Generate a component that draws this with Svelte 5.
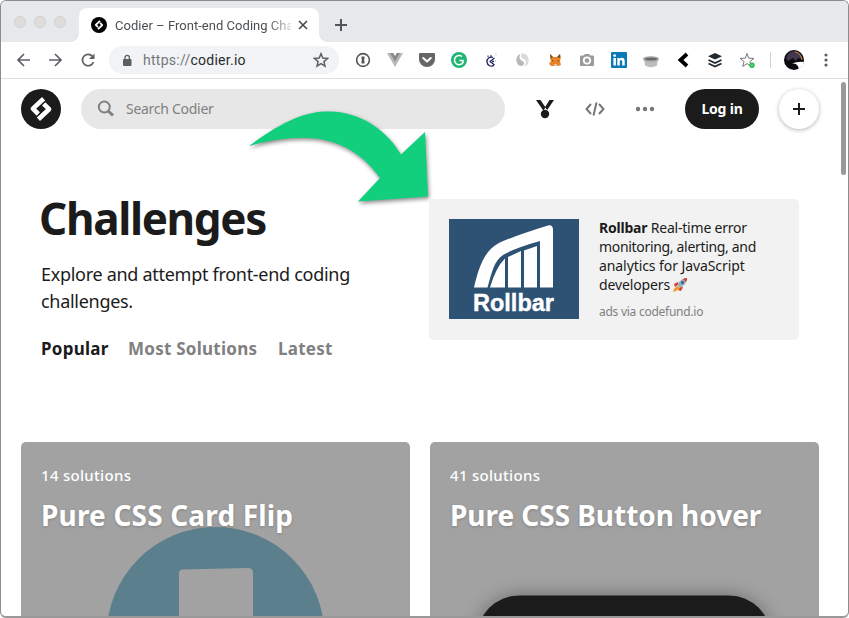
<script>
  const cards = [
    { count: '14 solutions', title: 'Pure CSS Card Flip', art: 'flip' },
    { count: '41 solutions', title: 'Pure CSS Button hover', art: 'button' }
  ];
</script>

{#snippet mark()}
  <g fill="none" stroke="#fff" stroke-width="4.600" stroke-linejoin="round">
    <path d="M22.600 9.800L11.900 19.600L17.300 25" />
    <path d="M22.700 14.800L28.100 20.200L17.400 30.200" />
  </g>
{/snippet}

<div class="window">
  <div class="tabs">
    <div class="lights"><i></i><i></i><i></i></div>
    <div class="tab">
      <svg class="fav" width="16" height="16" viewBox="0 0 40 40"><circle cx="20" cy="20" r="20" fill="#000" />{@render mark()}</svg>
      <span class="tabtitle">Codier – Front-end Coding Cha</span>
      <svg width="12" height="12" viewBox="0 0 12 12"><path d="M2 2L10 10M10 2L2 10" stroke="#45494d" stroke-width="1.600" /></svg>
      <b class="flare left"></b><b class="flare right"></b>
    </div>
    <svg class="newtab" width="14" height="14" viewBox="0 0 14 14"><path d="M7 1V13M1 7H13" stroke="#505458" stroke-width="2" /></svg>
  </div>

  <div class="toolbar">
    <svg class="nav" width="84" height="18" viewBox="0 0 84 18" fill="none" stroke="#5c6065" stroke-width="1.700">
      <path d="M15 9H3M9 3L3 9L9 15" /><path d="M34 9H46M40 3L46 9L40 15" />
      <path d="M77.300 5.100A5.700 5.700 0 1 0 78.500 11" /><path d="M79.500 2.500V8H74Z" fill="#5c6065" stroke="none" />
    </svg>
    <div class="url">
      <svg width="10" height="13" viewBox="0 0 10 13"><rect x="1" y="5" width="8.500" height="7" rx="1" fill="#5c6065" /><path d="M3 6V3.600a2.200 2.200 0 0 1 4.400 0V6" fill="none" stroke="#5c6065" stroke-width="1.300" /></svg>
      <span class="address"><em>https://</em>codier.io</span>
      <svg width="16" height="16" viewBox="0 0 16 16"><path d="M8 1.700L9.800 6.100L14.500 6.500L10.900 9.600L12 14.200L8 11.700L4 14.200L5.100 9.600L1.500 6.500L6.200 6.100Z" fill="none" stroke="#5c6065" stroke-width="1.500" /></svg>
    </div>
    <div class="ext">
      <svg viewBox="0 0 16 16"><circle cx="8" cy="8" r="6.400" fill="#fff" stroke="#555" stroke-width="1.600" /><path d="M6.500 4.500H9.500V7L8.900 8L9.500 9V11.500H6.500V9L7.100 8L6.500 7Z" fill="#555" /></svg>
      <svg viewBox="0 0 16 16"><path d="M0 1H4L8 8L12 1H16L8 15Z" fill="#b8b8b8" /><path d="M3 1H6.200L8 4L9.800 1H13L8 9.500Z" fill="#898989" /></svg>
      <svg viewBox="0 0 16 16"><path d="M1 1H15Q16 1 16 2V7.500A8 7.500 0 0 1 0 7.500V2Q0 1 1 1Z" fill="#666" /><path d="M4.200 6L8 9.500L11.800 6" fill="none" stroke="#fff" stroke-width="2" stroke-linecap="round" stroke-linejoin="round" /></svg>
      <svg viewBox="0 0 16 16"><circle cx="8" cy="8" r="8" fill="#20b573" /><path d="M11 4.500A4.600 4.600 0 1 0 12 10.500V8.400H8.500M12 8.200V11" fill="none" stroke="#fff" stroke-width="1.500" /></svg>
      <svg viewBox="0 0 16 16"><path d="M10 5.400A4.500 4.500 0 1 0 11 13.300" fill="none" stroke="#25205d" stroke-width="1.300" /><path d="M5 3.500V5M8 3V5" stroke="#25205d" stroke-width="1" /><path d="M11.500 6L7 9.500L11.500 13" fill="none" stroke="#25205d" stroke-width="1.200" /><circle cx="10" cy="9.500" r="1" fill="#25205d" /><path d="M13 1V4M12.500 8V10" stroke="#9ce5d3" stroke-width=".7" /></svg>
      <svg viewBox="0 0 16 16"><path d="M5.500 1.500A7 7 0 0 0 3 12.500C4 14 8 15 9 12C10 9 4.500 9 4.500 5Q4.500 3 5.500 1.500Z" fill="#b8b8b8" /><path d="M7 1.200C5 5 7 6 9.500 7.500C12 9 11 13 9 14.800A7 7 0 0 0 7 1.200Z" fill="#dadada" /></svg>
      <svg viewBox="0 0 16 16"><path d="M3 2L6 5H10L13 2L14 5L13 9L14 13L11 14H4L2 12L4 9L3 6Z" fill="#e98228" /><path d="M3 2L6 5L4 7ZM13 2L10 5L13 6ZM5 8L7 9L5 9.500ZM10 9L12 8V9.500Z" fill="#75502f" /><path d="M7 12H10V14H7Z" fill="#d4c5b8" /></svg>
      <svg viewBox="0 0 16 16"><path d="M2 3.500H4.500L6 2H10L11.500 3.500H14Q15 3.500 15 4.500V13Q15 14 14 14H2Q1 14 1 13V4.500Q1 3.500 2 3.500Z" fill="#9b9b9b" /><circle cx="8" cy="8.500" r="3.200" fill="none" stroke="#fff" stroke-width="1.800" /></svg>
      <svg viewBox="0 0 16 16"><rect width="16" height="16" rx="1" fill="#087ab5" /><g fill="#fff"><rect x="2.400" y="6" width="2.500" height="7.500" /><circle cx="3.650" cy="3.600" r="1.400" /><path d="M6.300 6H8.600V7Q9.500 5.700 11 5.800Q13.700 5.900 13.700 9.200V13.500H11.200V9.700Q11.200 8 10 8Q8.800 8 8.800 9.700V13.500H6.300Z" /></g></svg>
      <svg viewBox="0 0 16 16"><path d="M1 7H15L14 13.500Q8 17 2 13.500Z" fill="#bdbdbd" /><ellipse cx="8" cy="7" rx="8" ry="2.700" fill="#a2a2a2" /><ellipse cx="8" cy="7" rx="6" ry="1.300" fill="#686868" /></svg>
      <svg viewBox="0 0 16 16"><path d="M12 2L5.500 8L12 14" fill="none" stroke="#000" stroke-width="3.800" /></svg>
      <svg viewBox="0 0 16 16"><path d="M8 1L15 4.200L8 7.500L1 4.200Z" fill="#222a30" /><path d="M1.500 8L8 11L14.500 8M1.500 11.500L8 14.500L14.500 11.500" fill="none" stroke="#222a30" stroke-width="1.900" /></svg>
      <svg viewBox="0 0 16 16"><path d="M8 1.500L9.700 6.200L15 6.400L10.900 9.600L12.300 14.500L8 11.600L3.700 14.500L5.100 9.600L1 6.400L6.300 6.200Z" fill="#fff" stroke="#777" stroke-width="1" /><circle cx="13" cy="13.300" r="2.700" fill="#23bd4c" /><path d="M13 12V14.600M11.700 13.300H14.300" stroke="#8be39e" stroke-width=".7" /></svg>
    </div>
    <span class="sep"></span>
    <svg class="avatar" width="20" height="20" viewBox="0 0 20 20"><circle cx="10" cy="10" r="10" fill="#0d0b10" /><path d="M2 8Q4 1 11 1Q17 2 18 9L14 8L12 11L9 8L4 11Z" fill="#43374f" /><path d="M11 2Q17 3 18 10" fill="none" stroke="#b77833" stroke-width="1.200" /><path d="M20 12Q14 11 8 13.500Q12 13 13.500 15.500Q15 17 14.500 19A10 10 0 0 0 20 12Z" fill="#fff" /></svg>
    <svg class="dots" width="4" height="14" viewBox="0 0 4 14" fill="#5c6065"><circle cx="2" cy="2" r="1.600" /><circle cx="2" cy="7" r="1.600" /><circle cx="2" cy="12" r="1.600" /></svg>
  </div>

  <main>
    <header>
      <svg width="40" height="40" viewBox="0 0 40 40"><circle cx="20" cy="20" r="20" fill="#1b1b1b" />{@render mark()}</svg>
      <div class="search">
        <svg width="18" height="18" viewBox="0 0 18 18" fill="none" stroke="#808080"><circle cx="7.300" cy="7" r="5.500" stroke-width="2" /><path d="M11.200 11L16 15.500" stroke-width="3" /></svg>
        <span>Search Codier</span>
      </div>
      <svg class="medal" width="18" height="20" viewBox="0 0 18 20" fill="#1b1b1b"><path d="M0 1H4.500L9.600 8.500L7.300 11.500Z" /><path d="M13.500 1H18L11.200 11L9 8.200Z" /><circle cx="9" cy="15" r="4.200" /></svg>
      <svg class="code" width="20" height="16" viewBox="0 0 20 16" fill="none" stroke="#777" stroke-width="2"><path d="M6 3L1.500 8L6 13M14 3L18.500 8L14 13M11.500 1.500L8.500 14.500" /></svg>
      <svg class="more" width="20" height="6" viewBox="0 0 20 6" fill="#777"><circle cx="3" cy="3" r="2.200" /><circle cx="10" cy="3" r="2.200" /><circle cx="17" cy="3" r="2.200" /></svg>
      <button class="login"><span>Log in</span></button>
      <button class="add" aria-label="Add"><svg width="14" height="14" viewBox="0 0 14 14"><path d="M7 1V13M1 7H13" stroke="#1b1b1b" stroke-width="2" /></svg></button>
    </header>

    <section class="hero">
      <div class="intro">
        <h1>Challenges</h1>
        <p><span>Explore and attempt front-end coding</span><br /><span>challenges.</span></p>
        <nav><span class="n1">Popular</span><span class="n2">Most Solutions</span><span class="n3">Latest</span></nav>
      </div>
      <aside>
        <svg width="130" height="100" viewBox="0 0 130 100">
          <rect width="130" height="100" fill="#2d5274" />
          <path d="M25 68.500C30 47 36 31 50 24Q65 17 99 6.500Q104 5.500 104 11V68.500H91V22Q66 29 54 36C45 42 43 53 38.500 68.500Z" fill="#fff" />
          <path d="M41 68.500Q47 48 56 39.500V68.500ZM59 38L72 32V68.500H59ZM75 31.500L88 27V68.500H75Z" fill="#fff" />
          <text x="24" y="92" textLength="81" lengthAdjust="spacingAndGlyphs" fill="#fff" stroke="#fff" stroke-width=".4" font-family="Liberation Sans, sans-serif" font-weight="700" font-size="24">Rollbar</text>
        </svg>
        <div class="ad">
          <div class="a1"><strong>Rollbar</strong> Real-time error</div>
          <div class="a2">monitoring, alerting, and</div>
          <div class="a3">analytics for JavaScript</div>
          <div class="a4">developers <svg width="15" height="15" viewBox="0 0 15 15"><path d="M5 5L1 7L2 10L5 8ZM10 10L8 14L5 13L7 10Z" fill="#d83b36" /><path d="M4 9L1 12L0 15L3 14L7 11Z" fill="#f49a20" /><path d="M14 1Q8 1 4 8L7 11Q14 7 14 1Z" fill="#9facb7" /><path d="M14 1Q12 1 10 2L13 5Q14 3 14 1Z" fill="#d83b36" /><circle cx="9.500" cy="5.500" r="1.500" fill="#28628b" /></svg></div>
          <small>ads via codefund.io</small>
        </div>
      </aside>
    </section>

    <section class="cards">
      {#each cards as card}
        <article>
          <div class="count">{card.count}</div>
          <h2 class={card.art}>{card.title}</h2>
          <svg class="art" width="389" height="174" viewBox="0 0 389 174">
            {#if card.art === 'flip'}
              <circle cx="194.500" cy="194" r="109" fill="#5b7f8c" />
              <path d="M158 174V131Q158 127.500 162 127.500L227 126Q232 126 232 131V174Z" fill="#a2a2a2" />
            {:else}
              <rect class="pill" x="47" y="153.500" width="294" height="100" rx="42" fill="#1b1b1b" />
            {/if}
          </svg>
        </article>
      {/each}
    </section>
    <div class="scroll"></div>
  </main>

  <svg class="arrow" width="200" height="110" viewBox="0 0 200 110"><path d="M9 46C48 17 70 11 90 11.500C122 12 147 31 161 54.500L185 32L188 96.500L118 101.500L140 78C111 38 71 29 9 46Z" fill="#12cf7e" /></svg>
</div>

<style>
  :global(body) { background: #fff; overflow: hidden; }
  .window { box-sizing: border-box; position: relative; width: 849px; height: 618px; border: 1px solid #8d8d8d; border-bottom: 2px solid #999; border-radius: 6px; overflow: hidden; background: #fff; font-family: "Noto Sans", sans-serif; color: #1b1b1b; display: flex; flex-direction: column; }
  svg { display: block; flex: none; }
  span, .ad div, small, h1, h2, .count { white-space: nowrap; }
  .tabs { height: 41px; background: #e6e9ec; display: flex; align-items: flex-end; flex: none; }
  .lights { display: flex; gap: 8px; padding: 0 0 14px 13px; width: 65px; }
  .lights i { box-sizing: border-box; width: 12px; height: 12px; border-radius: 50%; background: #dedddc; border: 1px solid #d2d1d0; }
  .tab { position: relative; box-sizing: border-box; width: 240px; height: 34px; background: #fff; border-radius: 8px 8px 0 0; display: flex; align-items: center; padding-left: 12px; }
  .tabtitle { width: 176px; margin: 0 6px 0 8px; font: 13px Roboto, sans-serif; letter-spacing: .03px; color: #4b4f53; mask-image: linear-gradient(90deg, #000 152px, #0003 176px); }
  .flare { position: absolute; bottom: 0; width: 8px; height: 8px; }
  .left { left: -8px; background: radial-gradient(circle at 0 0, #e6e9ec 7.5px, #fff 8px); }
  .right { right: -8px; background: radial-gradient(circle at 100% 0, #e6e9ec 7.5px, #fff 8px); }
  .newtab { margin: 0 0 10px 15px; }
  .toolbar { box-sizing: border-box; height: 37px; border-bottom: 1px solid #dedfe0; display: flex; align-items: center; flex: none; }
  .nav { margin-left: 14px; }
  .url { box-sizing: border-box; width: 230px; height: 28px; border-radius: 14px; background: #f1f3f4; margin-left: 10px; padding: 0 10px 0 13px; display: flex; align-items: center; }
  .address { flex: 1; margin-left: 11px; font: 14px Roboto, sans-serif; letter-spacing: .26px; color: #292c30; }
  .address em { font-style: normal; color: #74787c; }
  .ext { display: flex; gap: 16px; margin-left: 16px; }
  .ext svg { width: 16px; height: 16px; }
  .sep { width: 1px; height: 16px; background: #d0d2d4; margin: 0 12px 0 15px; }
  .avatar { margin-left: 1px; }
  .dots { margin-left: 20px; }
  main { position: relative; flex: 1; overflow: hidden; padding: 0 20px; }
  header { height: 40px; padding-top: 10px; display: flex; align-items: center; }
  .search { box-sizing: border-box; width: 424px; height: 40px; margin-left: 20px; background: #e7e7e7; border-radius: 20px; padding-left: 16px; display: flex; align-items: center; color: #808080; }
  .search span { margin: -2px 0 0 11px; font-size: 14px; letter-spacing: -.28px; }
  .medal { margin-left: 31px; }
  .code { margin-left: 31px; }
  .more { margin-left: 30px; }
  button { border: 0; padding: 0; font: inherit; display: flex; align-items: center; justify-content: center; flex: none; }
  .login { width: 74px; height: 40px; background: #1b1b1b; color: #fff; border-radius: 20px; margin-left: 30px; padding-bottom: 2px; font-size: 14px; letter-spacing: -.2px; font-weight: 700; }
  .add { width: 40px; height: 40px; border-radius: 50%; background: #fff; margin-left: 20px; box-shadow: 0 1px 4px #0000004d; }
  .hero { display: flex; height: 243px; padding-top: 70px; }
  .intro { width: 388px; padding-left: 20px; box-sizing: content-box; }
  h1 { margin: -14px 0 0 -2px; height: 70px; font-size: 44px; line-height: 66px; letter-spacing: -1.35px; }
  p { margin: 6px 0 0; font-size: 18px; line-height: 27px; letter-spacing: -.29px; }
  nav { display: flex; margin-top: 20px; font-size: 17px; line-height: 27px; letter-spacing: .25px; font-weight: 700; color: #808080; }
  .n1 { color: #1b1b1b; width: 87px; }
  .n2 { width: 150px; }
  aside { box-sizing: border-box; width: 370px; height: 141px; padding: 20px; background: #f2f2f2; border-radius: 5px; display: flex; }
  .ad { margin: -1px 0 0 20px; font-size: 14px; line-height: 19px; }
  .a1 { letter-spacing: -.21px; }
  .a2 { letter-spacing: -.32px; }
  .a3 { letter-spacing: -.08px; }
  .a4 { display: flex; gap: 3px; align-items: center; letter-spacing: -.13px; }
  small { display: block; color: #808080; font-size: 12px; line-height: 17px; margin-top: 9px; letter-spacing: -.26px; }
  .cards { display: flex; gap: 20px; }
  article { position: relative; box-sizing: border-box; width: 389px; height: 174px; background: #a2a2a2; border-radius: 5px 5px 0 0; color: #fff; padding: 22px 20px 0; flex: none; overflow: hidden; }
  .count { position: relative; z-index: 1; font-size: 15px; line-height: 23px; letter-spacing: .3px; font-weight: 500; }
  h2 { position: relative; z-index: 1; margin: 7px 0 0; font-size: 28px; line-height: 42px; text-shadow: 0 1px 3px #0003; }
  h2.flip { letter-spacing: .17px; }
  h2.button { letter-spacing: -.04px; }
  .art { position: absolute; left: 0; top: 0; }
  .pill { filter: drop-shadow(0 0 9px #0005); }
  .scroll { position: absolute; right: 2px; top: 3px; width: 5px; height: 93px; border-radius: 3px; background: #999; }
  .arrow { position: absolute; left: 239px; top: 99px; filter: drop-shadow(1px 2px 2px #0007); }
</style>
